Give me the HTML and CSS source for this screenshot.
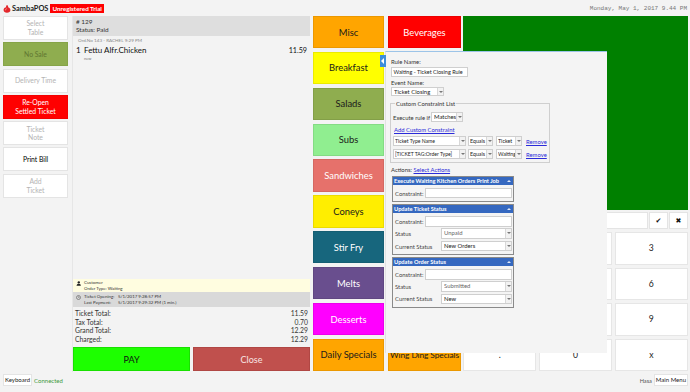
FILE: index.html
```html
<!DOCTYPE html>
<html lang="en">
<head>
    <meta charset="UTF-8">
    <meta name="viewport" content="width=device-width, initial-scale=1.0">
    <title>SambaPOS</title>
    <link rel="stylesheet" href="styles.css">
</head>
<body>
    <div class="topbar">
        <div class="brand">
            <svg class="logo" viewBox="0 0 10 11" width="8" height="9">
                <path d="M5 1 C6.5 2 6.8 3 6.2 4 C7.8 4.2 9.3 5.6 9.3 7.4 C9.3 9.5 7.4 10.8 5 10.8 C2.6 10.8 0.7 9.5 0.7 7.4 C0.7 5.4 2.3 4.1 4 4 C3.5 3 3.8 1.8 5 1 Z" fill="#e3262b"/>
                <path d="M4.6 5.6 C3.6 6 3 6.8 3.1 7.8" stroke="#ffb2a6" stroke-width="0.9" fill="none"/>
            </svg>
            <span class="brand-name">SambaPOS</span>
            <span class="trial">Unregistered Trial</span>
        </div>
        <div class="clock">Monday, May 1, 2017 9.44 PM</div>
    </div>

    <div class="main">
        <!-- ticket commands -->
        <div class="commands">
            <div class="cmd off">Select<br>Table</div>
            <div class="cmd no-sale">No Sale</div>
            <div class="cmd off">Delivery Time</div>
            <div class="cmd reopen">Re-Open<br>Settled Ticket</div>
            <div class="cmd off">Ticket<br>Note</div>
            <div class="cmd on">Print Bill</div>
            <div class="cmd off">Add<br>Ticket</div>
        </div>

        <!-- ticket -->
        <div class="ticket">
            <div class="ticket-head">
                <div># 129</div>
                <div>Status: Paid</div>
            </div>
            <div class="orders">
                <div class="order-meta">Ord.No 143 - RACHEL 9:29 PM</div>
                <div class="order">
                    <span class="qty">1</span>
                    <span class="item">Fettu Alfr.Chicken</span>
                    <span class="price">11.59</span>
                </div>
                <div class="order-state">new</div>
            </div>
            <div class="customer">
                <svg class="mini-icon" viewBox="0 0 6 6" width="5" height="5">
                    <circle cx="3.4" cy="1.6" r="1.4" fill="#222"/>
                    <path d="M0.6 5.8 C0.8 3.8 1.8 3.2 3.4 3.2 C5 3.2 5.8 4 5.8 5.8 Z" fill="#222"/>
                </svg>
                <div>
                    <div>Customer</div>
                    <div>Order Type: Waiting</div>
                </div>
            </div>
            <div class="times">
                <svg class="mini-icon" viewBox="0 0 6 6" width="5" height="5">
                    <circle cx="3" cy="3" r="2.4" fill="none" stroke="#555" stroke-width="0.7"/>
                    <path d="M3 1.6 V3 H4.2" stroke="#555" stroke-width="0.6" fill="none"/>
                </svg>
                <div class="times-grid">
                    <span>Ticket Opening:</span><span>5/1/2017 9:28:57 PM</span>
                    <span>Last Payment:</span><span>5/1/2017 9:29:32 PM (1 min.)</span>
                </div>
            </div>
            <div class="totals">
                <div class="total"><span>Ticket Total:</span><span>11.59</span></div>
                <div class="total"><span>Tax Total:</span><span>0.70</span></div>
                <div class="total"><span>Grand Total:</span><span>12.29</span></div>
                <div class="total"><span>Charged:</span><span>12.29</span></div>
            </div>
            <div class="pay-row">
                <div class="pay">PAY</div>
                <div class="close">Close</div>
            </div>
        </div>

        <!-- menu categories -->
        <div class="menu">
            <div class="cat" style="background:#ffa500">Misc</div>
            <div class="cat light" style="background:#ff0000">Beverages</div>
            <div class="cat" style="background:#ffff00">Breakfast</div>
            <div class="cat" style="background:#ffa500"></div>
            <div class="cat" style="background:#8fad4f">Salads</div>
            <div class="cat" style="background:#ffa500"></div>
            <div class="cat" style="background:#90ee90">Subs</div>
            <div class="cat" style="background:#ffa500"></div>
            <div class="cat light" style="background:#e6716b">Sandwiches</div>
            <div class="cat" style="background:#ffa500"></div>
            <div class="cat" style="background:#ffee00">Coneys</div>
            <div class="cat" style="background:#ffa500"></div>
            <div class="cat light" style="background:#17667d">Stir Fry</div>
            <div class="cat" style="background:#ffa500"></div>
            <div class="cat light" style="background:#694e8e">Melts</div>
            <div class="cat" style="background:#ffa500"></div>
            <div class="cat light" style="background:#ff00ff">Desserts</div>
            <div class="cat" style="background:#ffa500"></div>
            <div class="cat" style="background:#ffa500">Daily Specials</div>
            <div class="cat tight" style="background:#ffa500">Wing Ding Specials</div>
        </div>

        <!-- numpad side -->
        <div class="side">
            <div class="display"></div>
            <div class="entry">
                <div class="entry-box"></div>
                <div class="entry-btn">&#10004;</div>
                <div class="entry-btn">&#10006;</div>
            </div>
            <div class="keys">
                <div class="key">1</div><div class="key">2</div><div class="key">3</div>
                <div class="key">4</div><div class="key">5</div><div class="key">6</div>
                <div class="key">7</div><div class="key">8</div><div class="key">9</div>
                <div class="key">.</div><div class="key">0</div><div class="key">x</div>
            </div>
        </div>
    </div>

    <div class="bottombar">
        <div class="status">
            <span class="boxed">Keyboard</span>
            <span class="connected">Connected</span>
        </div>
        <div class="status">
            <span class="user">Hasa</span>
            <span class="boxed">Main Menu</span>
        </div>
    </div>

    <!-- rule editor popup, lies over the menu -->
    <div class="rule-editor">
        <span class="pin"></span>
        <div class="lbl">Rule Name:</div>
        <div class="txt rule-name">Waiting - Ticket Closing Rule</div>
        <div class="lbl event-lbl">Event Name:</div>
        <div class="sel event-sel"><span>Ticket Closing</span><i></i></div>

        <fieldset class="constraints">
            <legend>Custom Constraint List</legend>
            <div class="exec">
                <span>Execute rule if</span>
                <div class="sel w-match"><span>Matches</span><i></i></div>
            </div>
            <div class="link add-link">Add Custom Constraint</div>
            <div class="crow">
                <div class="sel w-name"><span>Ticket Type Name</span><i></i></div>
                <div class="sel w-op"><span>Equals</span><i></i></div>
                <div class="sel w-val"><span>Ticket</span><i></i></div>
                <span class="link">Remove</span>
            </div>
            <div class="crow">
                <div class="sel w-name"><span>[TICKET TAG:Order Type]</span><i></i></div>
                <div class="sel w-op"><span>Equals</span><i></i></div>
                <div class="sel w-val"><span>Waiting</span><i></i></div>
                <span class="link">Remove</span>
            </div>
        </fieldset>

        <div class="actions-line">Actions: <span class="link">Select Actions</span></div>

        <div class="action">
            <div class="action-head">Execute Waiting Kitchen Orders Print Job<i></i></div>
            <div class="action-body">
                <div class="arow"><span class="alabel">Constraint:</span><div class="txt grow"></div></div>
            </div>
        </div>
        <div class="action">
            <div class="action-head">Update Ticket Status<i></i></div>
            <div class="action-body">
                <div class="arow"><span class="alabel">Constraint:</span><div class="txt grow"></div></div>
                <div class="arow"><span class="alabel wide">Status</span><div class="sel grow dim"><span>Unpaid</span><i></i></div></div>
                <div class="arow"><span class="alabel wide">Current Status</span><div class="sel grow"><span>New Orders</span><i></i></div></div>
            </div>
        </div>
        <div class="action">
            <div class="action-head">Update Order Status<i></i></div>
            <div class="action-body">
                <div class="arow"><span class="alabel">Constraint:</span><div class="txt grow"></div></div>
                <div class="arow"><span class="alabel wide">Status</span><div class="sel grow dim"><span>Submitted</span><i></i></div></div>
                <div class="arow"><span class="alabel wide">Current Status</span><div class="sel grow"><span>New</span><i></i></div></div>
            </div>
        </div>
    </div>
</body>
</html>
```

FILE: styles.css
```css
body {
    margin: 0;
    width: 690px;
    height: 392px;
    overflow: hidden;
    position: relative;
    background-color: #f3f3f3;
    font-family: Lato, "Liberation Sans", sans-serif;
    color: #222;
}

/* top bar */
.topbar {
    height: 16px;
    display: flex;
    justify-content: space-between;
    align-items: center;
    padding: 0 3px;
}
.brand {
    display: flex;
    align-items: center;
}
.logo {
    margin-right: 1px;
}
.brand-name {
    font-size: 7.4px;
    font-weight: bold;
    color: #222;
    margin-right: 2px;
}
.trial {
    background-color: #ff0000;
    color: #fff;
    font-size: 6.3px;
    font-weight: bold;
    padding: 1px 2px;
    line-height: 7px;
}
.clock {
    font-family: "Liberation Mono", monospace;
    font-size: 6px;
    color: #777;
}

.main {
    display: flex;
    height: 356px;
}

/* left commands */
.commands {
    width: 69px;
    padding-left: 3px;
    border-right: 1px solid #e6e6e6;
    display: flex;
    flex-direction: column;
    gap: 2.3px;
}
.cmd {
    width: 65px;
    height: 24px;
    box-sizing: border-box;
    background: #fff;
    border: 1px solid #e4e4e4;
    display: flex;
    align-items: center;
    justify-content: center;
    text-align: center;
    font-size: 6.8px;
    line-height: 8.6px;
}
.cmd.off {
    color: #b4b4b4;
}
.cmd.on {
    color: #000;
}
.cmd.no-sale {
    background: #8fad4f;
    border-color: #86a448;
    color: #5f7631;
}
.cmd.reopen {
    background: #ff0000;
    border-color: #f20000;
    color: #fff;
}

/* ticket */
.ticket {
    width: 237px;
    margin-right: 3px;
    display: flex;
    flex-direction: column;
}
.ticket-head {
    height: 20px;
    box-sizing: border-box;
    background: #dedede;
    padding: 2px 3px;
    font-size: 6.4px;
    line-height: 8px;
    color: #333;
}
.orders {
    flex: 1;
    padding: 1px 3px 0 3px;
}
.order-meta {
    font-size: 4.6px;
    line-height: 6px;
    color: #888;
    padding-left: 2px;
}
.order {
    display: flex;
    align-items: baseline;
    font-size: 8px;
    line-height: 11px;
    margin-top: 2px;
    color: #111;
}
.qty {
    width: 8px;
}
.item {
    flex: 1;
}
.price {
    font-size: 7.2px;
}
.order-state {
    font-size: 4px;
    line-height: 5px;
    color: #777;
    padding-left: 8px;
}
.customer {
    height: 13px;
    box-sizing: border-box;
    background: #fffde0;
    display: flex;
    align-items: flex-start;
    padding: 1px 3px;
    font-size: 4.4px;
    line-height: 5.6px;
    color: #333;
}
.mini-icon {
    margin: 1px 3px 0 0;
}
.times {
    height: 15px;
    box-sizing: border-box;
    background: #d9d9d9;
    display: flex;
    align-items: flex-start;
    padding: 1.5px 3px;
    font-size: 4.4px;
    line-height: 6.4px;
    color: #333;
}
.times-grid {
    display: grid;
    grid-template-columns: 34px auto;
}
.totals {
    padding: 2px 2px 0 2px;
    height: 40px;
    box-sizing: border-box;
}
.total {
    display: flex;
    justify-content: space-between;
    font-size: 6.8px;
    line-height: 8.7px;
    color: #333;
}
.pay-row {
    display: flex;
    gap: 3px;
    height: 24px;
    margin-bottom: 1px;
}
.pay, .close {
    flex: 1;
    display: flex;
    align-items: center;
    justify-content: center;
    font-size: 9px;
    box-sizing: border-box;
}
.pay {
    background: #1dff00;
    border: 1px solid #19e000;
    color: #111;
}
.close {
    background: #c0504d;
    border: 1px solid #b04744;
    color: #f8e4e4;
}

/* menu categories */
.menu {
    width: 148px;
    display: grid;
    grid-template-columns: 71px 73px;
    grid-template-rows: repeat(10, 1fr);
    column-gap: 4px;
    row-gap: 3.6px;
    height: 355px;
}
.cat {
    display: flex;
    align-items: center;
    justify-content: center;
    font-size: 9.4px;
    color: #1a1a1a;
    border: 1px solid rgba(0, 0, 0, 0.08);
    box-sizing: border-box;
    white-space: nowrap;
    overflow: hidden;
}
.cat.light {
    color: #fff;
}
.cat.tight {
    font-size: 8.4px;
    letter-spacing: -0.1px;
}

/* numpad side */
.side {
    margin-left: 2px;
    width: 225px;
    display: flex;
    flex-direction: column;
}
.display {
    height: 194px;
    background: #008000;
}
.entry {
    margin-top: 2px;
    height: 17px;
    display: flex;
    gap: 1px;
}
.entry-box {
    flex: 1;
    background: #fff;
    border: 1px solid #e4e4e4;
}
.entry-btn {
    width: 17px;
    background: #fff;
    border: 1px solid #e4e4e4;
    display: flex;
    align-items: center;
    justify-content: center;
    font-family: "DejaVu Sans", sans-serif;
    font-size: 7px;
    color: #111;
}
.keys {
    margin-top: 3px;
    height: 139px;
    display: grid;
    grid-template-columns: repeat(3, 1fr);
    grid-template-rows: repeat(4, 1fr);
    gap: 3px 2.5px;
}
.key {
    background: #fff;
    border: 1px solid #e6e6e6;
    display: flex;
    align-items: center;
    justify-content: center;
    font-size: 8.6px;
    color: #222;
}

/* bottom bar */
.bottombar {
    display: flex;
    justify-content: space-between;
    padding: 2px 2px 0 3px;
}
.status {
    display: flex;
    align-items: center;
    gap: 2px;
}
.boxed {
    background: #fff;
    border: 1px solid #e4e4e4;
    font-size: 6px;
    line-height: 10px;
    padding: 0 1px;
    color: #222;
}
.connected {
    font-size: 6px;
    color: #3d9a3d;
}
.user {
    font-size: 5.6px;
    color: #555;
}

/* rule editor popup */
.rule-editor {
    position: absolute;
    left: 385px;
    top: 51px;
    width: 222px;
    height: 302px;
    box-sizing: border-box;
    background: #f4f4f4;
    border-top: 1px solid #9cc4e8;
    border-left: 1px solid #e2e2e2;
    padding: 6px 5px 0 5px;
    font-size: 5.9px;
    color: #333;
}
.pin {
    position: absolute;
    left: -6px;
    top: 3px;
    width: 6px;
    height: 12px;
    background: #3c8edb;
}
.pin::after {
    content: "";
    position: absolute;
    left: 1px;
    top: 3px;
    border-right: 3px solid #fff;
    border-top: 3px solid transparent;
    border-bottom: 3px solid transparent;
}
.lbl {
    line-height: 7px;
    margin-bottom: 2px;
}
.event-lbl {
    margin-top: 2px;
    margin-bottom: 1px;
}
.txt, .sel {
    height: 10px;
    box-sizing: border-box;
    background: #fff;
    border: 1px solid #cfcfcf;
    line-height: 8px;
    padding-left: 2px;
    color: #222;
    white-space: nowrap;
    overflow: hidden;
}
.rule-name {
    width: 77px;
    font-size: 5.5px;
    padding-left: 1.5px;
}
.sel {
    display: flex;
    padding-right: 0;
}
.sel span {
    flex: 1;
    overflow: hidden;
}
.sel i {
    width: 5px;
    flex: none;
    border-left: 1px solid #d8d8d8;
    background: #f2f2f2;
    position: relative;
}
.sel i::after {
    content: "";
    position: absolute;
    left: 0.5px;
    top: 3px;
    border-top: 2px solid #777;
    border-left: 2px solid transparent;
    border-right: 2px solid transparent;
}
.event-sel {
    width: 53px;
    height: 9px;
    line-height: 7px;
}
.constraints {
    margin: 4px 0 0 -1px;
    width: 159px;
    box-sizing: border-box;
    border: 1px solid #cfcfcf;
    padding: 0 2px 3px 2px;
}
.constraints legend {
    padding: 0 1px;
    margin-left: 2px;
    line-height: 7px;
}
.exec {
    display: flex;
    align-items: center;
    gap: 1px;
    margin-top: 5px;
}
.w-match {
    width: 32px;
    height: 10px;
}
.link {
    color: #2b2bd9;
    text-decoration: underline;
}
.add-link {
    line-height: 7px;
    margin: 4px 0 0 1px;
}
.crow {
    display: flex;
    align-items: center;
    margin-top: 3px;
}
.crow .sel {
    font-size: 5.3px;
    padding-left: 1px;
}
.crow .w-name {
    width: 73px;
    font-size: 5.1px;
}
.w-op {
    width: 25px;
    margin-left: 2px;
}
.w-val {
    width: 26px;
    margin-left: 3px;
}
.crow .link {
    margin-left: 4px;
}
.actions-line {
    line-height: 7px;
    margin-top: 3px;
}
.action {
    width: 122px;
    box-sizing: border-box;
    border: 1px solid #8a8a8a;
    margin: 3px 0 0 1px;
    background: #f4f4f4;
}
.action + .action {
    margin-top: 2px;
}
.action-head {
    height: 8px;
    background: #3568c0;
    color: #fff;
    font-weight: bold;
    font-size: 5.7px;
    line-height: 8px;
    padding-left: 1px;
    position: relative;
    white-space: nowrap;
}
.action-head i {
    position: absolute;
    right: 2px;
    top: 3px;
    border-bottom: 2px solid #dfe8f7;
    border-left: 2px solid transparent;
    border-right: 2px solid transparent;
}
.action-body {
    padding: 2px 1px 2px 2px;
}
.arow {
    display: flex;
    align-items: center;
    height: 12.3px;
}
.alabel {
    width: 30px;
    color: #444;
}
.alabel.wide {
    width: 46px;
}
.grow {
    flex: 1;
    height: 10.5px;
}
.dim span {
    color: #666;
}
```
